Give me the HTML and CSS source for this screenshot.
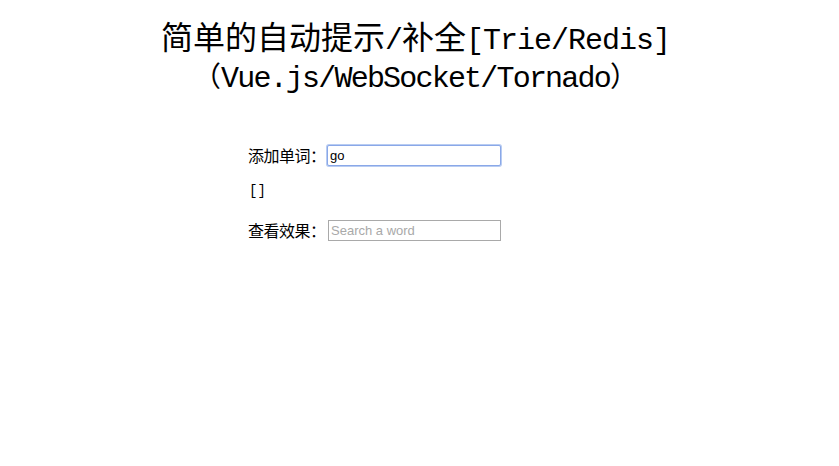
FILE: index.html
```html
<!DOCTYPE html>
<html lang="zh-CN">
<head>
<meta charset="utf-8">
<title>简单的自动提示/补全</title>
<link rel="stylesheet" href="styles.css">
</head>
<body>
<h1 class="title"><span class="line line-1">简单的自动提示<span class="lat">/</span>补全<span class="lat">[Trie/Redis]</span></span><span class="line line-2"><span class="paren">（</span><span class="lat">Vue.js/WebSocket/Tornado</span><span class="paren">）</span></span></h1>
<div class="panel">
  <div class="row">
    <label class="label" for="add">添加单词：</label><input id="add" class="field field-focus" type="text" value="go">
  </div>
  <div class="row row-text"><span class="mono">[]</span></div>
  <div class="row">
    <label class="label" for="search">查看效果：</label><input id="search" class="field" type="text" placeholder="Search a word">
  </div>
</div>
</body>
</html>
```
FILE: styles.css
```css
html, body {
  margin: 0;
  padding: 0;
  background: #ffffff;
  color: #000000;
}
body {
  font-family: "Noto Sans CJK SC", "Liberation Serif", serif;
}
.title {
  margin: 16px 0 0 0;
  padding-right: 8px;
  font-size: 32px;
  font-weight: normal;
  text-align: center;
  font-family: "Noto Sans CJK SC", sans-serif;
}
.line {
  display: block;
  height: 38px;
  line-height: 38px;
}
.lat {
  font-family: "Liberation Mono", monospace;
  font-size: 30px;
  line-height: 20px;
  letter-spacing: -1.5px;
}
.line-1 .lat {
  letter-spacing: -1px;
}
.line-2 .lat {
  letter-spacing: -1.8px;
}
.paren {
  font-size: 28px;
}
.panel {
  margin: 52px 0 0 248px;
  display: flex;
  flex-direction: column;
}
.row {
  display: flex;
  align-items: center;
  height: 22px;
}
.row-text {
  margin: 14px 0 17px 0;
}
.label {
  font-size: 16px;
  line-height: 22px;
  width: 80px;
  letter-spacing: -0.5px;
}
.mono {
  font-family: "Liberation Mono", monospace;
  font-size: 14px;
  padding-left: 1px;
}
.field {
  box-sizing: border-box;
  width: 173px;
  height: 21px;
  margin: 0;
  padding: 1px 2px;
  border: 1px solid #a9a9a9;
  font-family: "Liberation Sans", Arial, sans-serif;
  font-size: 13px;
  color: #000;
  outline: none;
}
.field::placeholder {
  color: #a9a9a9;
}
.field-focus {
  width: 174px;
  border: 1px solid #8aa8e8;
  border-radius: 2px;
  box-shadow: 0 0 0 1px #b8ccf2;
  margin-left: -1px;
}
```
